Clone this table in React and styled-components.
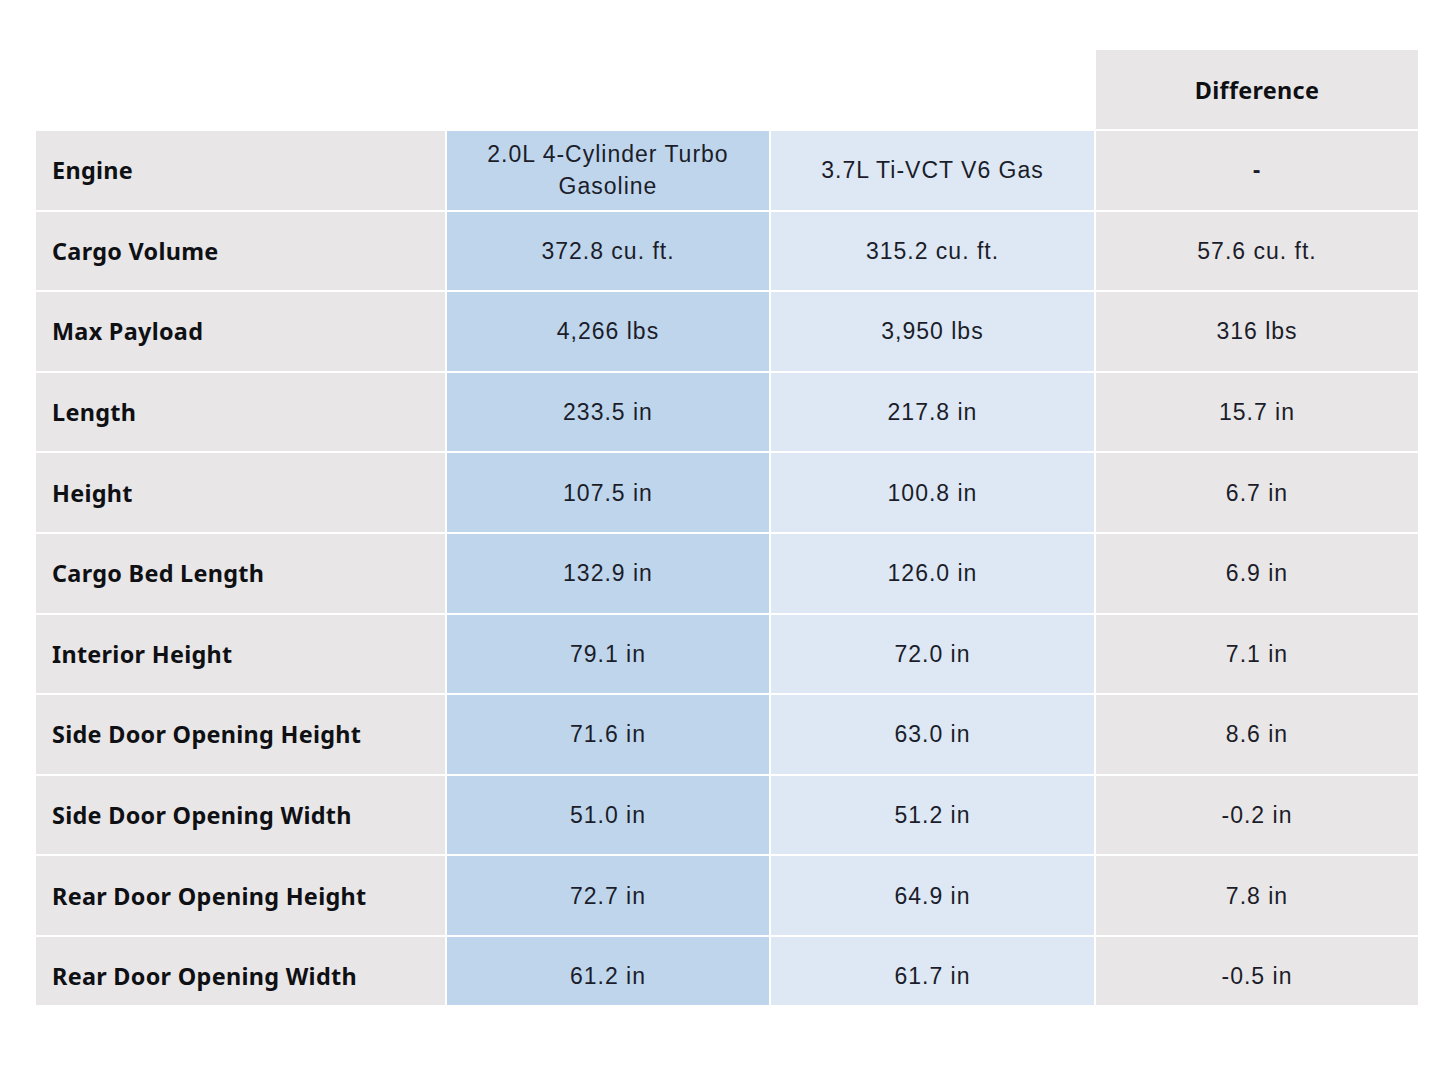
import React from "react";
import styled, { createGlobalStyle } from "styled-components";

const GlobalStyle = createGlobalStyle`
  html, body { margin: 0; padding: 0; background: #ffffff; }
  body { font-family: "Liberation Sans", Arial, sans-serif; color: #1b1c24; }
`;

const Page = styled.div`
  padding: 50px 0 0 36px;
  width: 1382px;
`;

const Clip = styled.div`
  height: 955px;
  overflow: hidden;
`;

const Table = styled.div`
  display: grid;
  grid-template-columns: 409px 322px 323px 322px;
  grid-auto-rows: 78.6px;
  grid-template-rows: 79px;
  column-gap: 2px;
  row-gap: 2px;
`;

const bg = {
  label: "#e8e6e7",
  a: "#bfd5ec",
  b: "#dde8f4",
  diff: "#e8e6e7",
  none: "transparent",
};

const Cell = styled.div`
  background: ${(p) => bg[p.$tone]};
  display: flex;
  align-items: center;
  justify-content: center;
  text-align: center;
  font-family: "Liberation Sans", Arial, sans-serif;
  font-size: 23px;
  letter-spacing: 1px;
  line-height: 32px;
  font-weight: ${(p) => (p.$strong ? 700 : 400)};
  color: #1b1d2a;
  padding: 0 24px;
`;

const LabelCell = styled(Cell)`
  justify-content: flex-start;
  text-align: left;
  padding: 0 16px;
  font-family: "Noto Sans", "Liberation Sans", sans-serif;
  font-weight: 700;
  font-size: 23.4px;
  letter-spacing: 0.3px;
  color: #0f1014;
`;

const HeadCell = styled(Cell)`
  font-family: "Noto Sans", "Liberation Sans", sans-serif;
  font-weight: 700;
  font-size: 23.4px;
  letter-spacing: 0.3px;
  color: #0f1014;
`;

const rows = [
  ["Engine", "2.0L 4-Cylinder Turbo Gasoline", "3.7L Ti-VCT V6 Gas", "-"],
  ["Cargo Volume", "372.8 cu. ft.", "315.2 cu. ft.", "57.6 cu. ft."],
  ["Max Payload", "4,266 lbs", "3,950 lbs", "316 lbs"],
  ["Length", "233.5 in", "217.8 in", "15.7 in"],
  ["Height", "107.5 in", "100.8 in", "6.7 in"],
  ["Cargo Bed Length", "132.9 in", "126.0 in", "6.9 in"],
  ["Interior Height", "79.1 in", "72.0 in", "7.1 in"],
  ["Side Door Opening Height", "71.6 in", "63.0 in", "8.6 in"],
  ["Side Door Opening Width", "51.0 in", "51.2 in", "-0.2 in"],
  ["Rear Door Opening Height", "72.7 in", "64.9 in", "7.8 in"],
  ["Rear Door Opening Width", "61.2 in", "61.7 in", "-0.5 in"],
];

export default function App() {
  return (
    <>
      <GlobalStyle />
      <Page>
        <Clip>
          <Table>
            <Cell $tone="none" />
            <Cell $tone="none" />
            <Cell $tone="none" />
            <HeadCell $tone="diff">Difference</HeadCell>
            {rows.map(([label, a, b, d]) => (
              <React.Fragment key={label}>
                <LabelCell $tone="label">{label}</LabelCell>
                <Cell $tone="a">{a}</Cell>
                <Cell $tone="b">{b}</Cell>
                <Cell $tone="diff" $strong={d === "-"}>{d}</Cell>
              </React.Fragment>
            ))}
          </Table>
        </Clip>
      </Page>
    </>
  );
}
